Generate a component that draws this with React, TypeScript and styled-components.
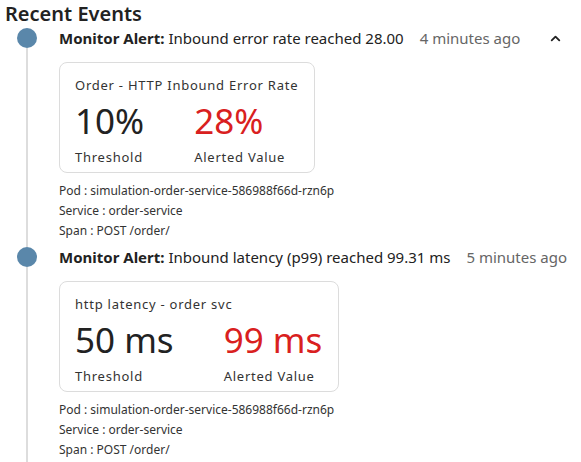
import React from 'react'
import styled, { createGlobalStyle } from 'styled-components'

const GlobalStyle = createGlobalStyle`
    body {
        margin: 0;
        background: #ffffff;
        font-family: "Noto Sans", "Open Sans", sans-serif;
        color: #222222;
    }
`

type Metric = {
    title: string
    threshold: string
    alerted: string
}

type EventItem = {
    label: string
    message: string
    time: string
    expandable?: boolean
    metric: Metric
    pod: string
    service: string
    span: string
}

const events: EventItem[] = [
    {
        label: 'Monitor Alert:',
        message: 'Inbound error rate reached 28.00',
        time: '4 minutes ago',
        expandable: true,
        metric: { title: 'Order - HTTP Inbound Error Rate', threshold: '10%', alerted: '28%' },
        pod: 'simulation-order-service-586988f66d-rzn6p',
        service: 'order-service',
        span: 'POST /order/'
    },
    {
        label: 'Monitor Alert:',
        message: 'Inbound latency (p99) reached 99.31 ms',
        time: '5 minutes ago',
        metric: { title: 'http latency - order svc', threshold: '50 ms', alerted: '99 ms' },
        pod: 'simulation-order-service-586988f66d-rzn6p',
        service: 'order-service',
        span: 'POST /order/'
    }
]

const ChevronUp = () => (
    <svg width="13" height="13" viewBox="0 0 24 24" fill="none" stroke="#222" strokeWidth="3.4" strokeLinecap="round" strokeLinejoin="round">
        <path d="M5 15.5l7-7 7 7" />
    </svg>
)

export default function App() {
    return (
        <Page>
            <GlobalStyle />
            <Title>Recent Events</Title>
            <Timeline>
                {events.map((event, index) => (
                    <Event key={index}>
                        <Rail>
                            <Dot />
                            <Line />
                        </Rail>
                        <Body>
                            <Header>
                                <Message>
                                    <strong>{event.label}</strong> {event.message}
                                </Message>
                                <Time>{event.time}</Time>
                                {event.expandable && (
                                    <Toggle>
                                        <ChevronUp />
                                    </Toggle>
                                )}
                            </Header>
                            <Card>
                                <CardTitle>{event.metric.title}</CardTitle>
                                <Values>
                                    <Value>{event.metric.threshold}</Value>
                                    <Value alerted>{event.metric.alerted}</Value>
                                    <ValueLabel>Threshold</ValueLabel>
                                    <ValueLabel>Alerted Value</ValueLabel>
                                </Values>
                            </Card>
                            <Details>
                                <div>Pod : {event.pod}</div>
                                <div>Service : {event.service}</div>
                                <div>Span : {event.span}</div>
                            </Details>
                        </Body>
                    </Event>
                ))}
            </Timeline>
        </Page>
    )
}

const Page = styled.div`
    width: 581px;
    height: 462px;
    overflow: hidden;
`

const Title = styled.div`
    padding-left: 5px;
    font-size: 20px;
    font-weight: 600;
    line-height: 28px;
    color: #222;
`

const Timeline = styled.div`
    display: flex;
    flex-direction: column;
`

const Event = styled.div`
    display: flex;
    padding-bottom: 6px;

    &:not(:first-child) {
        margin-top: -6px;
        padding-top: 6px;
    }
`

const Rail = styled.div`
    width: 54px;
    flex-shrink: 0;
    display: flex;
    flex-direction: column;
    align-items: center;
    margin-bottom: -6px;
`

const Dot = styled.div`
    width: 20px;
    height: 20px;
    border-radius: 50%;
    background: #5a87aa;
    flex-shrink: 0;
`

const Line = styled.div`
    flex: 1;
    width: 2px;
    background: #dddddd;
`

const Body = styled.div`
    flex: 1;
    min-width: 0;
    padding-left: 5px;
`

const Header = styled.div`
    display: flex;
    align-items: center;
    height: 20px;
    font-size: 15px;
    white-space: nowrap;

    strong {
        font-weight: 700;
    }
`

const Message = styled.span`
    color: #222;
`

const Time = styled.span`
    margin-left: 16px;
    color: #666;
`

const Toggle = styled.span`
    display: flex;
    margin-left: 29px;
`

const Card = styled.div`
    display: inline-block;
    margin-top: 14px;
    padding: 12px 16px 5px 15px;
    border: 1px solid #dcdcdc;
    border-radius: 8px;
`

const CardTitle = styled.div`
    font-size: 13px;
    line-height: 20px;
    letter-spacing: 0.75px;
    color: #333;
`

const Values = styled.div`
    display: grid;
    grid-template-columns: auto auto;
    column-gap: 50px;
    justify-content: start;
`

const Value = styled.div<{ alerted?: boolean }>`
    font-size: 35px;
    line-height: 52px;
    color: ${({ alerted }) => (alerted ? '#d92020' : '#222')};
`

const ValueLabel = styled.div`
    font-size: 13px;
    line-height: 20px;
    letter-spacing: 0.75px;
    color: #333;
`

const Details = styled.div`
    margin-top: 8px;
    font-size: 12px;
    line-height: 20px;
    color: #333;
`
